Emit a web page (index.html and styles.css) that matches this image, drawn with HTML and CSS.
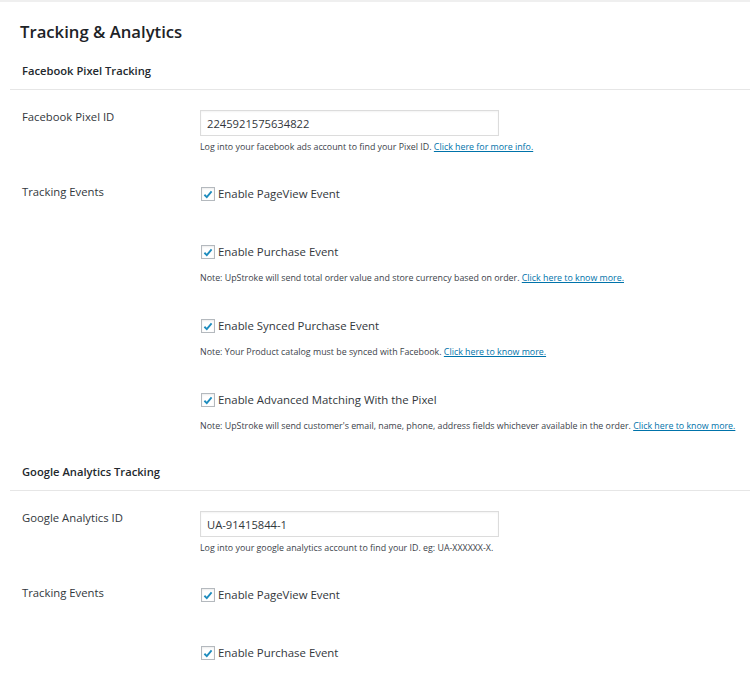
FILE: index.html
```html
<!DOCTYPE html>
<html lang="en">
<head>
<meta charset="utf-8">
<title>Tracking &amp; Analytics</title>
<link rel="stylesheet" href="styles.css">
</head>
<body>
<div class="page">
  <h1 class="title">Tracking &amp; Analytics</h1>

  <section class="section">
    <h2 class="section-head">Facebook Pixel Tracking</h2>
    <div class="row">
      <div class="label">Facebook Pixel ID</div>
      <div class="field">
        <input class="text-input" type="text" value="2245921575634822">
        <p class="desc">Log into your facebook ads account to find your Pixel ID. <a href="#">Click here for more info.</a></p>
      </div>
    </div>
    <div class="row row-events">
      <div class="label">Tracking Events</div>
      <div class="field field-events">
        <div class="item item-plain">
          <label class="check"><span class="box"><svg viewBox="0 0 13 13" width="13" height="13"><path d="M2.6 6.8 L5.2 9.4 L10.4 3.2" fill="none" stroke="#1e8cbe" stroke-width="2"/></svg></span>Enable PageView Event</label>
        </div>
        <div class="item">
          <label class="check"><span class="box"><svg viewBox="0 0 13 13" width="13" height="13"><path d="M2.6 6.8 L5.2 9.4 L10.4 3.2" fill="none" stroke="#1e8cbe" stroke-width="2"/></svg></span>Enable Purchase Event</label>
          <p class="desc note">Note: UpStroke will send total order value and store currency based on order. <a href="#">Click here to know more.</a></p>
        </div>
        <div class="item">
          <label class="check"><span class="box"><svg viewBox="0 0 13 13" width="13" height="13"><path d="M2.6 6.8 L5.2 9.4 L10.4 3.2" fill="none" stroke="#1e8cbe" stroke-width="2"/></svg></span>Enable Synced Purchase Event</label>
          <p class="desc note">Note: Your Product catalog must be synced with Facebook. <a href="#">Click here to know more.</a></p>
        </div>
        <div class="item">
          <label class="check"><span class="box"><svg viewBox="0 0 13 13" width="13" height="13"><path d="M2.6 6.8 L5.2 9.4 L10.4 3.2" fill="none" stroke="#1e8cbe" stroke-width="2"/></svg></span>Enable Advanced Matching With the Pixel</label>
          <p class="desc note">Note: UpStroke will send customer's email, name, phone, address fields whichever available in the order. <a href="#">Click here to know more.</a></p>
        </div>
      </div>
    </div>
  </section>

  <section class="section section-ga">
    <h2 class="section-head">Google Analytics Tracking</h2>
    <div class="row">
      <div class="label">Google Analytics ID</div>
      <div class="field">
        <input class="text-input" type="text" value="UA-91415844-1">
        <p class="desc">Log into your google analytics account to find your ID. eg: UA-XXXXXX-X.</p>
      </div>
    </div>
    <div class="row row-events">
      <div class="label">Tracking Events</div>
      <div class="field field-events">
        <div class="item item-plain">
          <label class="check"><span class="box"><svg viewBox="0 0 13 13" width="13" height="13"><path d="M2.6 6.8 L5.2 9.4 L10.4 3.2" fill="none" stroke="#1e8cbe" stroke-width="2"/></svg></span>Enable PageView Event</label>
        </div>
        <div class="item">
          <label class="check"><span class="box"><svg viewBox="0 0 13 13" width="13" height="13"><path d="M2.6 6.8 L5.2 9.4 L10.4 3.2" fill="none" stroke="#1e8cbe" stroke-width="2"/></svg></span>Enable Purchase Event</label>
        </div>
      </div>
    </div>
  </section>
</div>
</body>
</html>
```

FILE: styles.css
```css
html, body {
  margin: 0;
  padding: 0;
  background: #ffffff;
}

body {
  font-family: "Open Sans", "Noto Sans", "Liberation Sans", sans-serif;
  color: #23282d;
}

.page {
  border-top: 2px solid #efefef;
  height: 681px;
  overflow: hidden;
}

.title {
  margin: 0;
  padding: 18px 0 0 20px;
  font-size: 16.7px;
  line-height: 24px;
  font-weight: 600;
  color: #1d2327;
}

.section-head {
  margin: 18px 0 0 10px;
  padding: 0 0 9px 12px;
  font-size: 11.2px;
  line-height: 18px;
  font-weight: 600;
  color: #23282d;
  border-bottom: 1px solid #e6e6e6;
}

.section-ga {
  padding-top: 12px;
}

.row {
  display: grid;
  grid-template-columns: 178px 1fr;
  padding: 18px 0 0 22px;
}

.row-events {
  padding-top: 29px;
}

.label {
  font-size: 11.3px;
  line-height: 18px;
  color: #32373c;
}

.field {
  display: flex;
  flex-direction: column;
  align-items: flex-start;
}

.text-input {
  box-sizing: border-box;
  width: 299px;
  height: 26px;
  margin: 2px 0 0 0;
  padding: 0 6px;
  border: 1px solid #dcdcdc;
  box-shadow: inset 0 1px 2px rgba(0, 0, 0, 0.05);
  font-family: inherit;
  font-size: 11.2px;
  color: #32373c;
  background: #fff;
  outline: none;
}

.desc {
  margin: 4px 0 0 0;
  font-size: 8.85px;
  line-height: 14px;
  color: #3c434a;
  white-space: nowrap;
}

.desc a {
  color: #0073aa;
  text-decoration: underline;
}

.field-events {
  padding-top: 2px;
}

.item {
  margin-bottom: 32px;
}

.item-plain {
  margin-bottom: 40px;
}

.item:last-child {
  margin-bottom: 0;
}

.check {
  display: flex;
  align-items: center;
  gap: 3px;
  font-size: 11.4px;
  line-height: 18px;
  color: #32373c;
}

.box {
  box-sizing: border-box;
  width: 14px;
  height: 14px;
  border: 1px solid #b4b9be;
  background: #fff;
  display: flex;
  align-items: center;
  justify-content: center;
  margin-left: 1px;
  box-shadow: inset 0 1px 2px rgba(0, 0, 0, 0.08);
}

.box svg {
  display: block;
}

.note {
  margin-top: 10px;
}
```
